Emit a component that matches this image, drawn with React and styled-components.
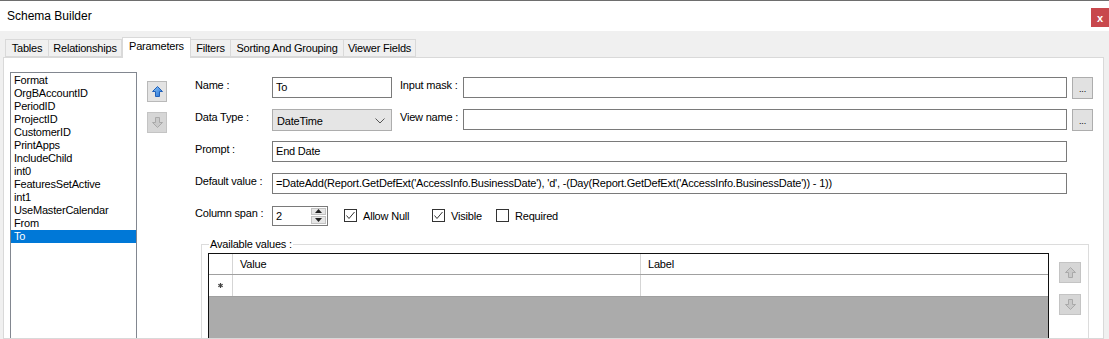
import React from 'react';
import styled, { createGlobalStyle } from 'styled-components';

const Global = createGlobalStyle`
  html, body { margin: 0; padding: 0; background: #f0f0f0; }
  body {
    font-family: "Liberation Sans", Arial, sans-serif;
    font-size: 11px;
    letter-spacing: -0.2px;
    color: #000;
  }
`;

const Window = styled.div`
  width: 1109px;
  height: 339px;
  overflow: hidden;
  display: flex;
  flex-direction: column;
  background: #f0f0f0;
`;

const TitleBar = styled.div`
  height: 30px;
  flex: none;
  background: #fff;
  border-top: 1px solid #6e6e6e;
  display: flex;
  justify-content: space-between;
  align-items: flex-start;
  padding-left: 7px;
`;

const Title = styled.div`
  font-size: 12px;
  letter-spacing: 0;
  line-height: 30px;
`;

const Close = styled.div`
  width: 18px;
  height: 19px;
  margin-top: 7px;
  background: #c8474c;
  color: #fff;
  font-weight: bold;
  font-size: 11px;
  display: flex;
  align-items: center;
  justify-content: center;
`;

const Body = styled.div`
  flex: 1;
  display: flex;
  flex-direction: column;
  padding: 6px 5px 0 3px;
  min-height: 0;
`;

const TabStrip = styled.div`
  display: flex;
  align-items: flex-end;
  height: 20px;
  padding-left: 2px;
  flex: none;
`;

const Tab = styled.div`
  width: ${p => p.w}px;
  height: ${p => (p.active ? 21 : 18)}px;
  margin-bottom: ${p => (p.active ? -1 : 0)}px;
  position: relative;
  z-index: ${p => (p.active ? 2 : 1)};
  box-sizing: border-box;
  border: 1px solid #d9d9d9;
  border-bottom: ${p => (p.active ? 'none' : '1px solid #d9d9d9')};
  border-left: ${p => (p.first || p.active ? '1px solid #d9d9d9' : 'none')};
  background: ${p => (p.active ? '#fff' : '#f0f0f0')};
  display: flex;
  justify-content: center;
  padding-top: 2px;
  white-space: nowrap;
`;

const TabPage = styled.div`
  flex: 1;
  display: flex;
  align-items: flex-start;
  background: #fff;
  border: 1px solid #d9d9d9;
  padding: 14px 0 0 6px;
  min-height: 0;
  overflow: hidden;
`;

const ListBox = styled.div`
  width: 127px;
  height: 300px;
  flex: none;
  box-sizing: border-box;
  border: 1px solid #828790;
  padding-top: 1px;
`;

const ListItem = styled.div`
  height: 13px;
  line-height: 13px;
  padding-left: 3px;
  background: ${p => (p.selected ? '#0078d7' : 'transparent')};
  color: ${p => (p.selected ? '#fff' : '#000')};
`;

const ArrowColumn = styled.div`
  display: flex;
  flex-direction: column;
  gap: ${p => p.gap}px;
  margin: ${p => p.top}px 0 0 ${p => p.left}px;
  flex: none;
`;

const MoveButton = styled.div`
  width: ${p => p.w || 20}px;
  height: 21px;
  box-sizing: border-box;
  border: 1px solid ${p => (p.disabled ? '#c4c4c4' : '#b9b9b9')};
  background: ${p => (p.disabled ? '#d6d6d6' : '#e3e3e3')};
  display: flex;
  align-items: center;
  justify-content: center;
`;

const Form = styled.div`
  width: 898px;
  margin: 5px 0 0 28px;
  display: flex;
  flex-direction: column;
  gap: 11px;
  flex: none;
`;

const Row = styled.div`
  display: flex;
  align-items: center;
  height: 21px;
`;

const Label = styled.div`
  width: ${p => p.w}px;
  margin-left: ${p => p.ml || 0}px;
  flex: none;
  white-space: nowrap;
  align-self: flex-start;
  padding-top: 2px;
`;

const TextBox = styled.div`
  width: ${p => (p.w ? `${p.w}px` : 'auto')};
  flex: ${p => (p.w ? 'none' : '1')};
  height: 21px;
  box-sizing: border-box;
  border: 1px solid #7a7a7a;
  background: #fff;
  padding-left: 3px;
  line-height: 19px;
  white-space: nowrap;
  overflow: hidden;
`;

const Select = styled.div`
  width: 120px;
  height: 22px;
  box-sizing: border-box;
  border: 1px solid #adadad;
  background: #e5e5e5;
  display: flex;
  align-items: center;
  justify-content: space-between;
  padding: 2px 6px 0 4px;
`;

const DotsButton = styled.div`
  width: 21px;
  height: 22px;
  margin-left: 5px;
  box-sizing: border-box;
  border: 1px solid #adadad;
  background: #e1e1e1;
  display: flex;
  justify-content: center;
  align-items: flex-end;
  padding-bottom: 4px;
  font-size: 9px;
  line-height: 9px;
  flex: none;
`;

const Spinner = styled.div`
  width: 56px;
  height: 20px;
  box-sizing: border-box;
  border: 1px solid #7a7a7a;
  display: flex;
  flex: none;
`;

const SpinValue = styled.div`
  flex: 1;
  padding-left: 3px;
  line-height: 18px;
`;

const SpinButtons = styled.div`
  width: 15px;
  margin: 1px 1px 1px 0;
  display: flex;
  flex-direction: column;
  gap: 1px;
`;

const SpinHalf = styled.div`
  flex: 1;
  background: #e6e6e6;
  border: 1px solid #c2c2c2;
  display: flex;
  align-items: center;
  justify-content: center;
`;

const CheckItem = styled.label`
  width: ${p => (p.w ? `${p.w}px` : 'auto')};
  display: flex;
  align-items: center;
  gap: 6px;
  flex: none;
  margin-left: ${p => p.ml || 0}px;
`;

const Box = styled.span`
  width: 13px;
  height: 13px;
  box-sizing: border-box;
  border: 1px solid #333;
  background: #fff;
  display: flex;
  align-items: center;
  justify-content: center;
`;

const Group = styled.fieldset`
  width: 888px;
  margin: 1px 0 0 6px;
  padding: 2px 0 0 6px;
  border: 1px solid #dcdcdc;
  border-bottom: none;
  box-sizing: border-box;
  display: flex;
  height: 120px;
`;

const Legend = styled.legend`
  padding: 0 1px;
  margin-left: 1px;
  line-height: 13px;
`;

const GroupInner = styled.div`
  display: flex;
  align-items: flex-start;
`;

const Grid = styled.div`
  width: 841px;
  height: 110px;
  box-sizing: border-box;
  border: 1px solid #111;
  background: #ababab;
  flex: none;
`;

const GridRow = styled.div`
  display: grid;
  grid-template-columns: 24px 408px 1fr;
  height: ${p => p.h}px;
  background: #fff;
  border-bottom: 1px solid ${p => p.line};
`;

const Cell = styled.div`
  border-right: 1px solid #d5d5d5;
  padding-left: ${p => (p.center ? 0 : 7)}px;
  line-height: ${p => p.h}px;
  display: flex;
  align-items: center;
  justify-content: ${p => (p.center ? 'center' : 'flex-start')};
  &:last-child { border-right: none; }
`;

const Arrow = ({ dir, disabled }) => {
  const fill = disabled ? '#c9c9c9' : 'url(#blueArrow)';
  const stroke = disabled ? '#a9a9a9' : '#2160b8';
  return (
    <svg width="11" height="11" viewBox="0 0 11 11">
      <defs>
        <linearGradient id="blueArrow" x1="0" y1="0" x2="1" y2="1">
          <stop offset="0" stopColor="#8cc4f6" />
          <stop offset="1" stopColor="#1f6fd6" />
        </linearGradient>
      </defs>
      <g transform={dir === 'down' ? 'rotate(180 5.5 5.5)' : undefined}>
        <polygon points="5.5,0.5 10.5,5.5 7.5,5.5 7.5,10.5 3.5,10.5 3.5,5.5 0.5,5.5" fill={fill} stroke={stroke} strokeWidth="1" strokeLinejoin="round" />
      </g>
    </svg>
  );
};

const Check = () => (
  <svg width="11" height="11" viewBox="0 0 11 11">
    <polyline points="1.5,5.5 4,8.5 9.5,2" fill="none" stroke="#333" strokeWidth="1" />
  </svg>
);

const Tri = ({ up }) => (
  <svg width="7" height="4" viewBox="0 0 7 4">
    <polygon points={up ? '3.5,0 7,4 0,4' : '0,0 7,0 3.5,4'} fill="#222" />
  </svg>
);

const params = ['Format', 'OrgBAccountID', 'PeriodID', 'ProjectID', 'CustomerID', 'PrintApps', 'IncludeChild', 'int0', 'FeaturesSetActive', 'int1', 'UseMasterCalendar', 'From', 'To'];

const tabs = [
  { name: 'Tables', w: 44 },
  { name: 'Relationships', w: 73 },
  { name: 'Parameters', w: 69, active: true },
  { name: 'Filters', w: 40 },
  { name: 'Sorting And Grouping', w: 113 },
  { name: 'Viewer Fields', w: 72 },
];

export default function App() {
  return (
    <Window>
      <Global />
      <TitleBar>
        <Title>Schema Builder</Title>
        <Close>x</Close>
      </TitleBar>
      <Body>
        <TabStrip>
          {tabs.map((t, i) => (
            <Tab key={t.name} w={t.w} active={t.active} first={i === 0}>{t.name}</Tab>
          ))}
        </TabStrip>
        <TabPage>
          <ListBox>
            {params.map(p => (
              <ListItem key={p} selected={p === 'To'}>{p}</ListItem>
            ))}
          </ListBox>
          <ArrowColumn top={9} left={10} gap={10}>
            <MoveButton><Arrow dir="up" /></MoveButton>
            <MoveButton disabled><Arrow dir="down" disabled /></MoveButton>
          </ArrowColumn>
          <Form>
            <Row>
              <Label w={77}>Name :</Label>
              <TextBox w={120}>To</TextBox>
              <Label w={63} ml={8}>Input mask :</Label>
              <TextBox />
              <DotsButton>...</DotsButton>
            </Row>
            <Row>
              <Label w={77}>Data Type :</Label>
              <Select>
                <span>DateTime</span>
                <svg width="10" height="6" viewBox="0 0 10 6">
                  <polyline points="0.5,0.5 5,5 9.5,0.5" fill="none" stroke="#555" strokeWidth="1" />
                </svg>
              </Select>
              <Label w={63} ml={8}>View name :</Label>
              <TextBox />
              <DotsButton>...</DotsButton>
            </Row>
            <Row>
              <Label w={77}>Prompt :</Label>
              <TextBox w={795}>End Date</TextBox>
            </Row>
            <Row>
              <Label w={77}>Default value :</Label>
              <TextBox w={795}>=DateAdd(Report.GetDefExt('AccessInfo.BusinessDate'), 'd', -(Day(Report.GetDefExt('AccessInfo.BusinessDate')) - 1))</TextBox>
            </Row>
            <Row>
              <Label w={77}>Column span :</Label>
              <Spinner>
                <SpinValue>2</SpinValue>
                <SpinButtons>
                  <SpinHalf><Tri up /></SpinHalf>
                  <SpinHalf><Tri /></SpinHalf>
                </SpinButtons>
              </Spinner>
              <CheckItem w={88} ml={16}><Box><Check /></Box>Allow Null</CheckItem>
              <CheckItem w={64}><Box><Check /></Box>Visible</CheckItem>
              <CheckItem><Box />Required</CheckItem>
            </Row>
            <Group>
              <Legend>Available values :</Legend>
              <GroupInner>
                <Grid>
                  <GridRow h={20} line="#a0a0a0">
                    <Cell h={20} />
                    <Cell h={20}>Value</Cell>
                    <Cell h={20}>Label</Cell>
                  </GridRow>
                  <GridRow h={21} line="#a0a0a0">
                    <Cell h={21} center>
                      <svg width="5" height="5" viewBox="0 0 5 5">
                        <g stroke="#444" strokeWidth="1.2">
                          <line x1="2.5" y1="0" x2="2.5" y2="5" />
                          <line x1="0.3" y1="1.2" x2="4.7" y2="3.8" />
                          <line x1="0.3" y1="3.8" x2="4.7" y2="1.2" />
                        </g>
                      </svg>
                    </Cell>
                    <Cell h={21} />
                    <Cell h={21} />
                  </GridRow>
                </Grid>
                <ArrowColumn top={9} left={10} gap={11}>
                  <MoveButton w={22} disabled><Arrow dir="up" disabled /></MoveButton>
                  <MoveButton w={22} disabled><Arrow dir="down" disabled /></MoveButton>
                </ArrowColumn>
              </GroupInner>
            </Group>
          </Form>
        </TabPage>
      </Body>
    </Window>
  );
}
